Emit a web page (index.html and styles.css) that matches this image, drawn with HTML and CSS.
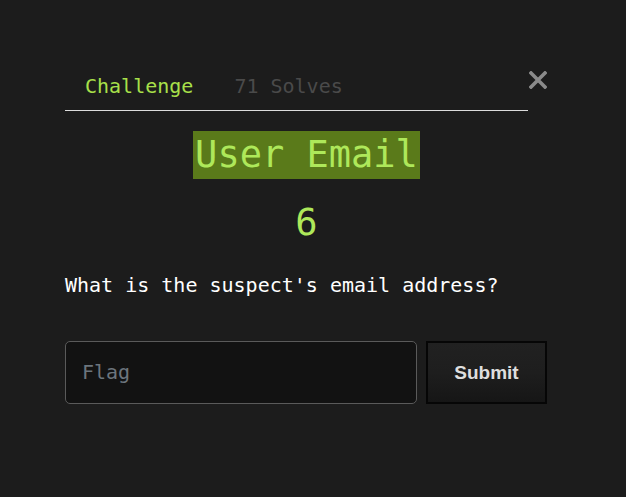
FILE: index.html
```html
<!DOCTYPE html>
<html>
<head>
<meta charset="utf-8">
<link rel="stylesheet" href="styles.css">
</head>
<body>
<div class="modal">
  <div class="header">
    <div class="tabs">
      <span class="tab active">Challenge</span>
      <span class="tab">71 Solves</span>
    </div>
    <svg class="close" width="18" height="18" viewBox="0 0 18 18"><path d="M2 2 L16 16 M16 2 L2 16" stroke="#8a8a8a" stroke-width="3.6" stroke-linecap="square"/></svg>
  </div>
  <div class="title-row"><h1 class="title">User Email</h1></div>
  <div class="points">6</div>
  <p class="question">What is the suspect's email address?</p>
  <div class="form">
    <div class="input">Flag</div>
    <div class="submit">Submit</div>
  </div>
</div>
</body>
</html>
```
FILE: styles.css
```css
html, body {
  margin: 0;
  padding: 0;
  background: #1c1c1c;
  height: 100%;
}
.modal {
  padding: 65px 0 0 65px;
  font-family: "DejaVu Sans Mono", "Liberation Mono", monospace;
}
.header {
  position: relative;
  width: 463px;
}
.tabs {
  display: flex;
  gap: 1px;
  border-bottom: 1px solid #dcdcdc;
  height: 45px;
  align-items: flex-start;
}
.tab {
  padding: 0 20px;
  font-size: 20px;
  color: #4a4a4a;
  line-height: 42px;
}
.tab.active {
  color: #a8e04a;
}
.close {
  position: absolute;
  right: -19px;
  top: 6px;
}
.title-row {
  width: 483px;
  display: flex;
  justify-content: center;
  margin-top: 20px;
}
.title {
  margin: 0;
  font-weight: normal;
  font-size: 37px;
  line-height: 48px;
  height: 48px;
  color: #aee85a;
  background: #5a7a1a;
  padding: 0 2px;
}
.points {
  width: 483px;
  text-align: center;
  font-size: 37px;
  color: #aee85a;
  margin-top: 20px;
  line-height: 48px;
}
.question {
  margin: 24px 0 0;
  font-size: 20px;
  color: #ffffff;
  line-height: 28px;
}
.form {
  display: flex;
  gap: 9px;
  margin-top: 42px;
}
.input {
  width: 334px;
  height: 61px;
  border: 1px solid #5a5a5a;
  border-radius: 5px;
  background: #121212;
  color: #6c757d;
  font-size: 20px;
  line-height: 61px;
  padding-left: 16px;
}
.submit {
  width: 117px;
  height: 59px;
  border: 2px solid #060606;
  background: linear-gradient(#212121 0%, #1e1e1e 50%, #161616 100%);
  color: #dedede;
  font-family: "Liberation Sans", Arial, sans-serif;
  font-weight: bold;
  font-size: 19px;
  display: flex;
  align-items: center;
  justify-content: center;
}
```
